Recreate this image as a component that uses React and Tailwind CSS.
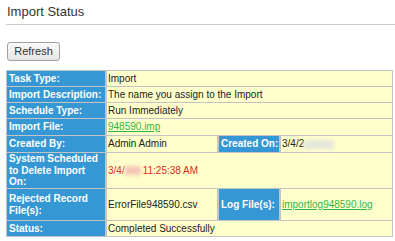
import React from 'react';

const Label = ({ children, wrap = false }) => (
  <div
    className={`bg-[#3598d4] text-white font-bold text-[10px] leading-[11.5px] pl-[2px] pr-px flex items-center overflow-hidden ${
      wrap ? '' : 'whitespace-nowrap'
    }`}
  >
    {children}
  </div>
);

const Value = ({ children, span = '', className = '' }) => (
  <div className={`bg-[#ffffcc] text-[10px] leading-[12px] text-[#222] px-[1px] flex items-center whitespace-nowrap ${span} ${className}`}>
    {children}
  </div>
);

const Blur = ({ w, color }) => (
  <span className={`inline-block h-[9px] blur-[2px] ${w} ${color}`} />
);

const App = () => {
  return (
    <div className="w-[395px] h-[241px] bg-white overflow-hidden font-['Liberation_Sans',Arial,sans-serif]">
      {/* Header */}
      <div className="pt-[4px] pl-[7px] text-[13px] leading-[16px] text-[#333]">Import Status</div>
      <div className="mt-[4px] ml-[6px] h-px bg-[#cfcac4]" />

      <button className="mt-[17px] ml-[7px] w-[53px] h-[19px] rounded-[3px] border border-[#a0a0a0] bg-gradient-to-b from-[#fafafa] to-[#e6e6e6] text-[11px] leading-none text-[#333]">
        Refresh
      </button>

      {/* Details table */}
      <div className="mt-[8px] ml-[6px] w-[387px] border border-[#c4c4c4] bg-[#c4c4c4] grid grid-cols-[98px_110px_60px_1fr] grid-rows-[15px_15px_15px_16px_16px_35px_31px_15px] gap-x-[2px] gap-y-px">
        <Label>Task Type:</Label>
        <Value span="col-span-3">Import</Value>

        <Label>Import Description:</Label>
        <Value span="col-span-3">The name you assign to the Import</Value>

        <Label>Schedule Type:</Label>
        <Value span="col-span-3">Run Immediately</Value>

        <Label>Import File:</Label>
        <Value span="col-span-3">
          <span className="text-[#33b44a] underline">948590.imp</span>
        </Value>

        <Label>Created By:</Label>
        <Value>Admin Admin</Value>
        <Label>Created On:</Label>
        <Value>
          3/4/2
          <Blur w="w-[30px]" color="bg-[#e4e4dc]" />
        </Value>

        <Label wrap>System Scheduled to Delete Import On:</Label>
        <Value span="col-span-3" className="text-[#e02a1e]">
          3/4/
          <Blur w="w-[16px]" color="bg-[#f3c4b4]" />
          <span className="ml-[2px]">11:25:38 AM</span>
        </Value>

        <Label wrap>Rejected Record File(s):</Label>
        <Value>ErrorFile948590.csv</Value>
        <Label>Log File(s):</Label>
        <Value>
          <span className="text-[#33b44a] underline">importlog948590.log</span>
        </Value>

        <Label>Status:</Label>
        <Value span="col-span-3">Completed Successfully</Value>
      </div>
    </div>
  );
};

export default App;
